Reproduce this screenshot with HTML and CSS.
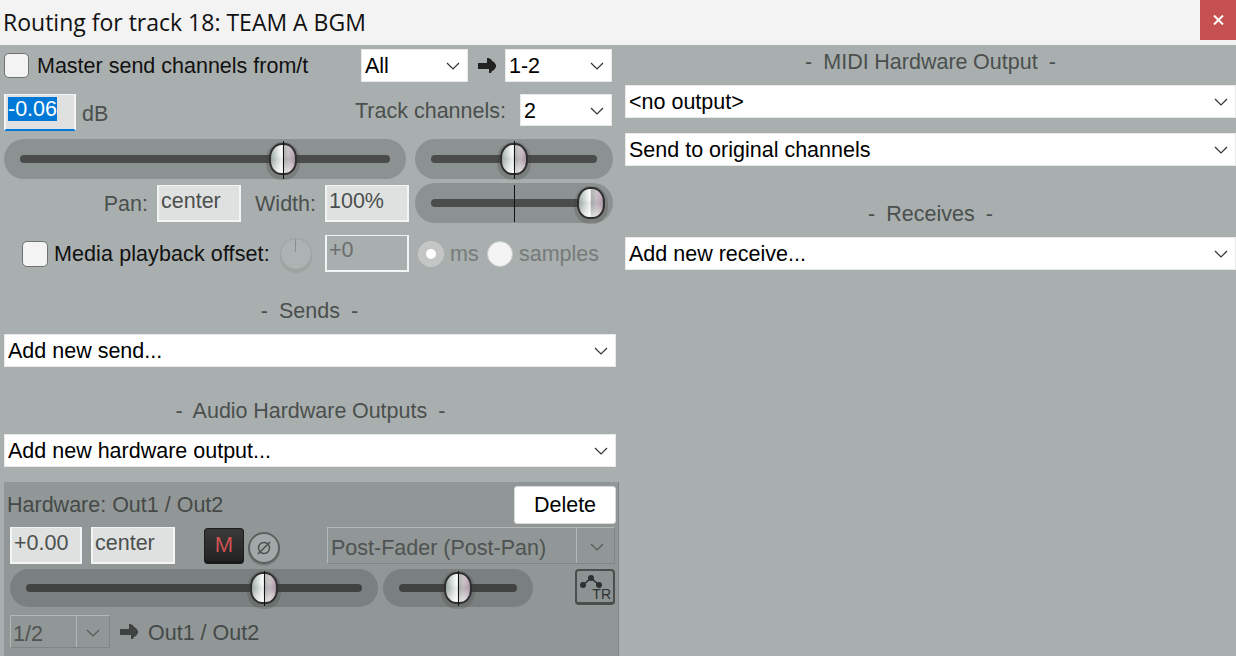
FILE: index.html
```html
<!DOCTYPE html>
<html lang="en">

<head>
    <meta charset="UTF-8">
    <title>Routing for track 18: TEAM A BGM</title>
    <link rel="stylesheet" href="styles.css">
</head>

<body>
    <svg class="defs" width="0" height="0">
        <defs>
            <symbol id="chev" viewBox="0 0 14 8">
                <path d="M1 1 L7 7 L13 1" fill="none" stroke="currentColor" stroke-width="1.2" />
            </symbol>
            <symbol id="arrow" viewBox="0 0 18 16">
                <path d="M0 5 H9 V0 H11 L12 1 H13 L14 3 L16 4 L18 7 V9 L16 12 L14 13 L13 15 H11 V11 H0 Z" fill="currentColor" />
            </symbol>
        </defs>
    </svg>

    <div class="titlebar">
        <span class="title">Routing for track 18: TEAM A BGM</span>
        <span class="close"><svg width="11" height="10" viewBox="0 0 11 10"><path d="M1 0.5 L10 9.5 M10 0.5 L1 9.5" stroke="#fff" stroke-width="2" /></svg></span>
    </div>

    <div class="main">
        <!-- left side -->
        <div class="left">
            <div class="row row-master">
                <span class="check"></span>
                <span class="lbl dark master-lbl">Master send channels from/t</span>
                <div class="sel sel-all">All<svg class="chev"><use href="#chev" /></svg></div>
                <svg class="arr"><use href="#arrow" /></svg>
                <div class="sel sel-12">1-2<svg class="chev"><use href="#chev" /></svg></div>
            </div>

            <div class="row row-vol">
                <div class="input vol-input"><span class="selected">-0.06</span></div>
                <span class="lbl db">dB</span>
                <span class="lbl track-lbl">Track channels:</span>
                <div class="sel sel-ch">2<svg class="chev"><use href="#chev" /></svg></div>
            </div>

            <div class="row row-sliders">
                <div class="slider vol-slider"><div class="track"></div><div class="thumb" style="left: 69.5%"></div></div>
                <div class="slider pan-slider"><div class="track"></div><div class="thumb" style="left: 50%"></div></div>
            </div>

            <div class="row row-pan">
                <span class="lbl pan-lbl">Pan:</span>
                <div class="input txt-input">center</div>
                <span class="lbl width-lbl">Width:</span>
                <div class="input txt-input">100%</div>
                <div class="slider pan-slider width-slider"><div class="track"></div><div class="tick"></div><div class="thumb" style="left: 89%"></div></div>
            </div>

            <div class="row row-media">
                <span class="check"></span>
                <span class="lbl dark media-lbl">Media playback offset:</span>
                <span class="knob"></span>
                <div class="input off-input">+0</div>
                <span class="radio on"></span>
                <span class="lbl faint ms">ms</span>
                <span class="radio"></span>
                <span class="lbl faint samples">samples</span>
            </div>

            <div class="heading sends-h">-&nbsp; Sends &nbsp;-</div>
            <div class="sel sel-wide">Add new send...<svg class="chev"><use href="#chev" /></svg></div>

            <div class="heading hw-h">-&nbsp; Audio Hardware Outputs &nbsp;-</div>
            <div class="sel sel-wide">Add new hardware output...<svg class="chev"><use href="#chev" /></svg></div>

            <div class="panel">
                <div class="row panel-top">
                    <span class="lbl">Hardware: Out1 / Out2</span>
                    <button class="delete">Delete</button>
                </div>
                <div class="row panel-ctl">
                    <div class="input p-vol">+0.00</div>
                    <div class="input p-pan">center</div>
                    <div class="mute">M</div>
                    <div class="phase">
                        <svg width="18" height="18" viewBox="0 0 18 18"><circle cx="9" cy="9" r="5.5" fill="none" stroke="#4a4e4d" stroke-width="1.4" /><path d="M3 15 L15 3" stroke="#4a4e4d" stroke-width="1.4" /></svg>
                    </div>
                    <div class="dis-sel post-sel"><span class="dis-txt">Post-Fader (Post-Pan)</span><span class="dis-btn"><svg class="chev"><use href="#chev" /></svg></span></div>
                </div>
                <div class="row panel-sliders">
                    <div class="slider dark-slider p-vol-slider"><div class="track"></div><div class="thumb" style="left: 69%"></div></div>
                    <div class="slider dark-slider p-pan-slider"><div class="track"></div><div class="thumb" style="left: 50%"></div></div>
                    <div class="tr-btn">
                        <svg width="32" height="28" viewBox="0 0 32 28"><path d="M6 14 L14 7 L22 14" fill="none" stroke="#2e3131" stroke-width="1.6" /><circle cx="6" cy="14" r="3" fill="#2e3131" /><circle cx="14" cy="7" r="3" fill="#2e3131" /><circle cx="22" cy="14" r="3" fill="#2e3131" /></svg>
                        <span class="tr-txt">TR</span>
                    </div>
                </div>
                <div class="row panel-bottom">
                    <div class="dis-sel ch-sel"><span class="dis-txt">1/2</span><span class="dis-btn"><svg class="chev"><use href="#chev" /></svg></span></div>
                    <svg class="arr arr-out"><use href="#arrow" /></svg>
                    <span class="lbl out-lbl">Out1 / Out2</span>
                </div>
            </div>
        </div>

        <!-- right side -->
        <div class="right">
            <div class="heading midi-h">-&nbsp; MIDI Hardware Output &nbsp;-</div>
            <div class="sel sel-wide sel-midi">&lt;no output&gt;<svg class="chev"><use href="#chev" /></svg></div>
            <div class="sel sel-wide sel-orig">Send to original channels<svg class="chev"><use href="#chev" /></svg></div>
            <div class="heading rcv-h">-&nbsp; Receives &nbsp;-</div>
            <div class="sel sel-wide">Add new receive...<svg class="chev"><use href="#chev" /></svg></div>
        </div>
    </div>
</body>

</html>
```

FILE: styles.css
```css
* {
    box-sizing: border-box;
}

html,
body {
    margin: 0;
    padding: 0;
    height: 656px;
    overflow: hidden;
}

body {
    font-family: "Liberation Sans", Arial, sans-serif;
    font-size: 21.5px;
    background: #a9afae;
    color: #4b4f4e;
}

.defs {
    position: absolute;
}

.titlebar {
    height: 45px;
    background: #f3f3f3;
    display: flex;
    justify-content: space-between;
}

.title {
    font-family: "Open Sans", sans-serif;
    font-size: 23px;
    line-height: 45px;
    color: #111;
    padding-left: 3px;
}

.close {
    width: 36px;
    height: 40px;
    background: #c75050;
    display: flex;
    align-items: center;
    justify-content: center;
}

.main {
    display: flex;
    height: 611px;
}

.left {
    width: 625px;
    padding-left: 4px;
}

.right {
    flex: 1;
}

.row {
    display: flex;
    align-items: center;
}

.lbl {
    white-space: nowrap;
}

.dark {
    color: #111;
}

.faint {
    color: #767b7a;
}

.check {
    width: 25px;
    height: 25px;
    border: 1px solid #6e7271;
    border-radius: 5px;
    background: #f3f3f3;
    flex: none;
}

.sel {
    background: #fff;
    box-shadow: inset 0 0 0 1px #e8eaea;
    color: #000;
    height: 33px;
    line-height: 35px;
    padding-left: 4px;
    position: relative;
    flex: none;
}

.chev {
    position: absolute;
    right: 8px;
    top: 13px;
    width: 14px;
    height: 8px;
    color: #333;
}

.arr {
    width: 18px;
    height: 16px;
    color: #222;
    flex: none;
}

.input {
    background: #dfe1e0;
    border: 2px solid #f3f4f4;
    border-top-width: 1px;
    color: #4b4f4e;
    padding-left: 2px;
    flex: none;
}

/* row 1 */
.row-master {
    height: 33px;
    margin-top: 4px;
}

.master-lbl {
    margin: 2px 0 0 8px;
    width: 324px;
}

.sel-all {
    width: 107px;
}

.row-master .arr {
    margin: 0 9px 0 10px;
}

.sel-12 {
    width: 107px;
}

/* row 2 */
.row-vol {
    height: 37px;
    margin-top: 12px;
}

.vol-input {
    width: 72px;
    height: 37px;
    padding-top: 2px;
    border-bottom: 2px solid #0078d7;
}

.selected {
    background: #0078d7;
    color: #fff;
    display: block;
    width: fit-content;
    line-height: 24px;
}

.db {
    margin: 3px 0 0 6px;
    width: 273px;
}

.track-lbl {
    width: 165px;
    margin-top: -3px;
}

.sel-ch {
    width: 92px;
    height: 32px;
    line-height: 34px;
    margin-top: -6px;
}

/* sliders */
.slider {
    position: relative;
    height: 40px;
    background: #8c9291;
    border-radius: 20px;
    flex: none;
}

.track {
    position: absolute;
    left: 16px;
    right: 16px;
    top: 16px;
    height: 8px;
    border-radius: 4px;
    background: #4a4c4b;
}

.thumb {
    position: absolute;
    top: 4px;
    width: 28px;
    height: 32px;
    margin-left: -14px;
    border: 2px solid #2f2f2f;
    border-radius: 46% 46% 44% 44%;
    background:
        linear-gradient(180deg, rgba(255, 255, 255, .1), rgba(255, 255, 255, 0) 35%, rgba(0, 0, 0, .06) 50%, rgba(255, 255, 255, .55)),
        linear-gradient(90deg, #a4b0ad 0%, #dfe6e4 30%, #ffffff 47%, #a9aeac 50%, #c6c0c4 72%, #c3afbc 88%, #a89ca6 100%);
    box-shadow: 0 2px 0 3px rgba(60, 60, 60, .22);
}

.thumb::after {
    content: "";
    position: absolute;
    left: 50%;
    top: -4px;
    height: 38px;
    width: 1px;
    background: #111;
}

.tick {
    position: absolute;
    left: 50%;
    top: 2px;
    width: 1px;
    height: 37px;
    background: #111;
}

.width-slider .thumb::after {
    display: none;
}

.row-sliders {
    margin-top: 8px;
    gap: 9px;
}

.vol-slider {
    width: 402px;
}

.pan-slider {
    width: 198px;
}

/* row 4 */
.row-pan {
    margin-top: 4px;
    height: 40px;
}

.pan-lbl {
    width: 144px;
    margin: 2px 9px 0 0;
    text-align: right;
}

.txt-input {
    width: 84px;
    height: 37px;
    line-height: 30px;
}

.width-lbl {
    width: 75px;
    margin: 2px 9px 0 0;
    text-align: right;
}

.width-slider {
    margin-left: 6px;
}

/* row 5 */
.row-media {
    margin-top: 12px;
    height: 37px;
}

.row-media .check {
    margin-left: 18px;
    width: 26px;
    height: 26px;
}

.row-media .lbl {
    margin-top: 2px;
}

.media-lbl {
    margin-left: 6px;
    width: 226px;
    letter-spacing: .1px;
}

.knob {
    width: 32px;
    height: 32px;
    border-radius: 50%;
    border: 1px solid #9ca2a1;
    background: linear-gradient(90deg, transparent 14px, #8b908f 14px, #8b908f 15px, transparent 15px) no-repeat center top / 100% 13px, #adb3b2;
    box-shadow: 0 3px 0 rgba(90, 90, 90, .12);
    flex: none;
}

.off-input {
    width: 84px;
    height: 37px;
    margin-left: 13px;
    background: #a9afae;
    color: #6a6e6d;
    line-height: 28px;
}

.radio {
    width: 26px;
    height: 26px;
    border-radius: 50%;
    background: #f4f4f4;
    border: 1px solid #c8cccb;
    margin-left: 9px;
    flex: none;
    position: relative;
}

.radio.on {
    background: #c4c6c5;
}

.radio.on::after {
    content: "";
    position: absolute;
    left: 7px;
    top: 7px;
    width: 10px;
    height: 10px;
    border-radius: 50%;
    background: #fff;
}

.ms {
    margin-left: 6px;
    width: 37px;
}

.ms + .radio {
    margin-left: 0;
}

.samples {
    margin-left: 6px;
}

/* headings and wide combos */
.heading {
    text-align: center;
    height: 23px;
    line-height: 23px;
    word-spacing: -.4px;
}

.sends-h {
    margin: 28px 10px 11px 0;
}

.hw-h {
    margin: 33px 8px 11px 0;
}

.sel-wide {
    width: 612px;
}

.right .sel-wide {
    width: 611px;
}

.midi-h {
    margin-top: 6px;
    margin-bottom: 11px;
}

.sel-orig {
    margin-top: 15px;
}

.rcv-h {
    margin: 37px 0 11px;
}

/* hardware panel */
.panel {
    margin-top: 15px;
    width: 615px;
    height: 174px;
    background: #919796;
    padding: 4px 3px 0 6px;
    color: #454948;
    border-right: 1px solid #7f8584;
}

.panel-top {
    justify-content: space-between;
    height: 38px;
    margin: 0 -1px 0 -3px;
}

.delete {
    font: inherit;
    width: 102px;
    height: 38px;
    background: #fff;
    color: #000;
    border: 1px solid #d8dada;
    border-radius: 3px;
    padding: 0;
}

.panel-ctl {
    margin-top: 3px;
    height: 37px;
}

.panel-ctl .input {
    height: 37px;
    line-height: 30px;
}

.p-vol {
    width: 72px;
}

.panel-ctl .p-pan {
    width: 84px;
    margin: 0 29px 0 9px;
}

.mute {
    width: 40px;
    height: 36px;
    background: linear-gradient(#3a3a3a, #232323);
    border: 1px solid #1c1c1c;
    border-bottom: 3px solid #1a1a1a;
    border-radius: 4px;
    color: #cf5252;
    font-size: 22px;
    text-align: center;
    line-height: 32px;
    flex: none;
}

.phase {
    width: 32px;
    height: 32px;
    margin: 4px 0 0 4px;
    border-radius: 50%;
    border: 2px solid #5c6160;
    background: #a2a8a7;
    box-shadow: 0 2px 0 #7b8180;
    display: flex;
    align-items: center;
    justify-content: center;
    flex: none;
}

.dis-sel {
    display: flex;
    height: 37px;
    line-height: 40px;
    border: 1px solid #7f8584;
    border-top: 1px solid #b4b9b8;
    border-left: 1px solid #b4b9b8;
    flex: none;
}

.post-sel {
    margin-left: 47px;
    width: 288px;
}

.dis-txt {
    flex: 1;
    padding-left: 3px;
    color: #4f5352;
}

.dis-btn {
    width: 38px;
    position: relative;
    border-left: 1px solid #b4b9b8;
}

.dis-btn .chev {
    right: 10px;
    top: 15px;
    color: #545857;
}

.panel-sliders {
    margin-top: 5px;
    height: 42px;
    align-items: flex-start;
}

.dark-slider {
    height: 38px;
    background: #7a807f;
    border-radius: 19px;
}

.dark-slider .track {
    top: 15px;
    background: #414342;
}

.dark-slider .thumb {
    top: 3px;
}

.dark-slider .thumb::after {
    top: -3px;
    height: 35px;
}

.p-vol-slider {
    width: 368px;
}

.p-pan-slider {
    width: 150px;
    margin-left: 5px;
}

.tr-btn {
    width: 40px;
    height: 36px;
    margin-left: 42px;
    border: 2px solid #4a4e4d;
    border-bottom-width: 3px;
    border-radius: 4px;
    background: #8d9392;
    position: relative;
    flex: none;
}

.tr-btn svg {
    position: absolute;
    left: 0;
    top: 0;
}

.tr-txt {
    position: absolute;
    right: 2px;
    bottom: 1px;
    font-size: 14px;
    line-height: 14px;
    color: #2e3131;
}

.panel-bottom {
    margin-top: 4px;
    height: 33px;
}

.ch-sel {
    width: 100px;
    height: 33px;
    line-height: 36px;
}

.ch-sel .dis-txt {
    padding-left: 2px;
}

.ch-sel .dis-btn {
    width: 33px;
}

.ch-sel .dis-btn .chev {
    right: 9px;
    top: 13px;
}

.arr-out {
    margin: 0 10px;
    color: #3e4241;
}

.out-lbl {
    margin-top: 4px;
}
```
